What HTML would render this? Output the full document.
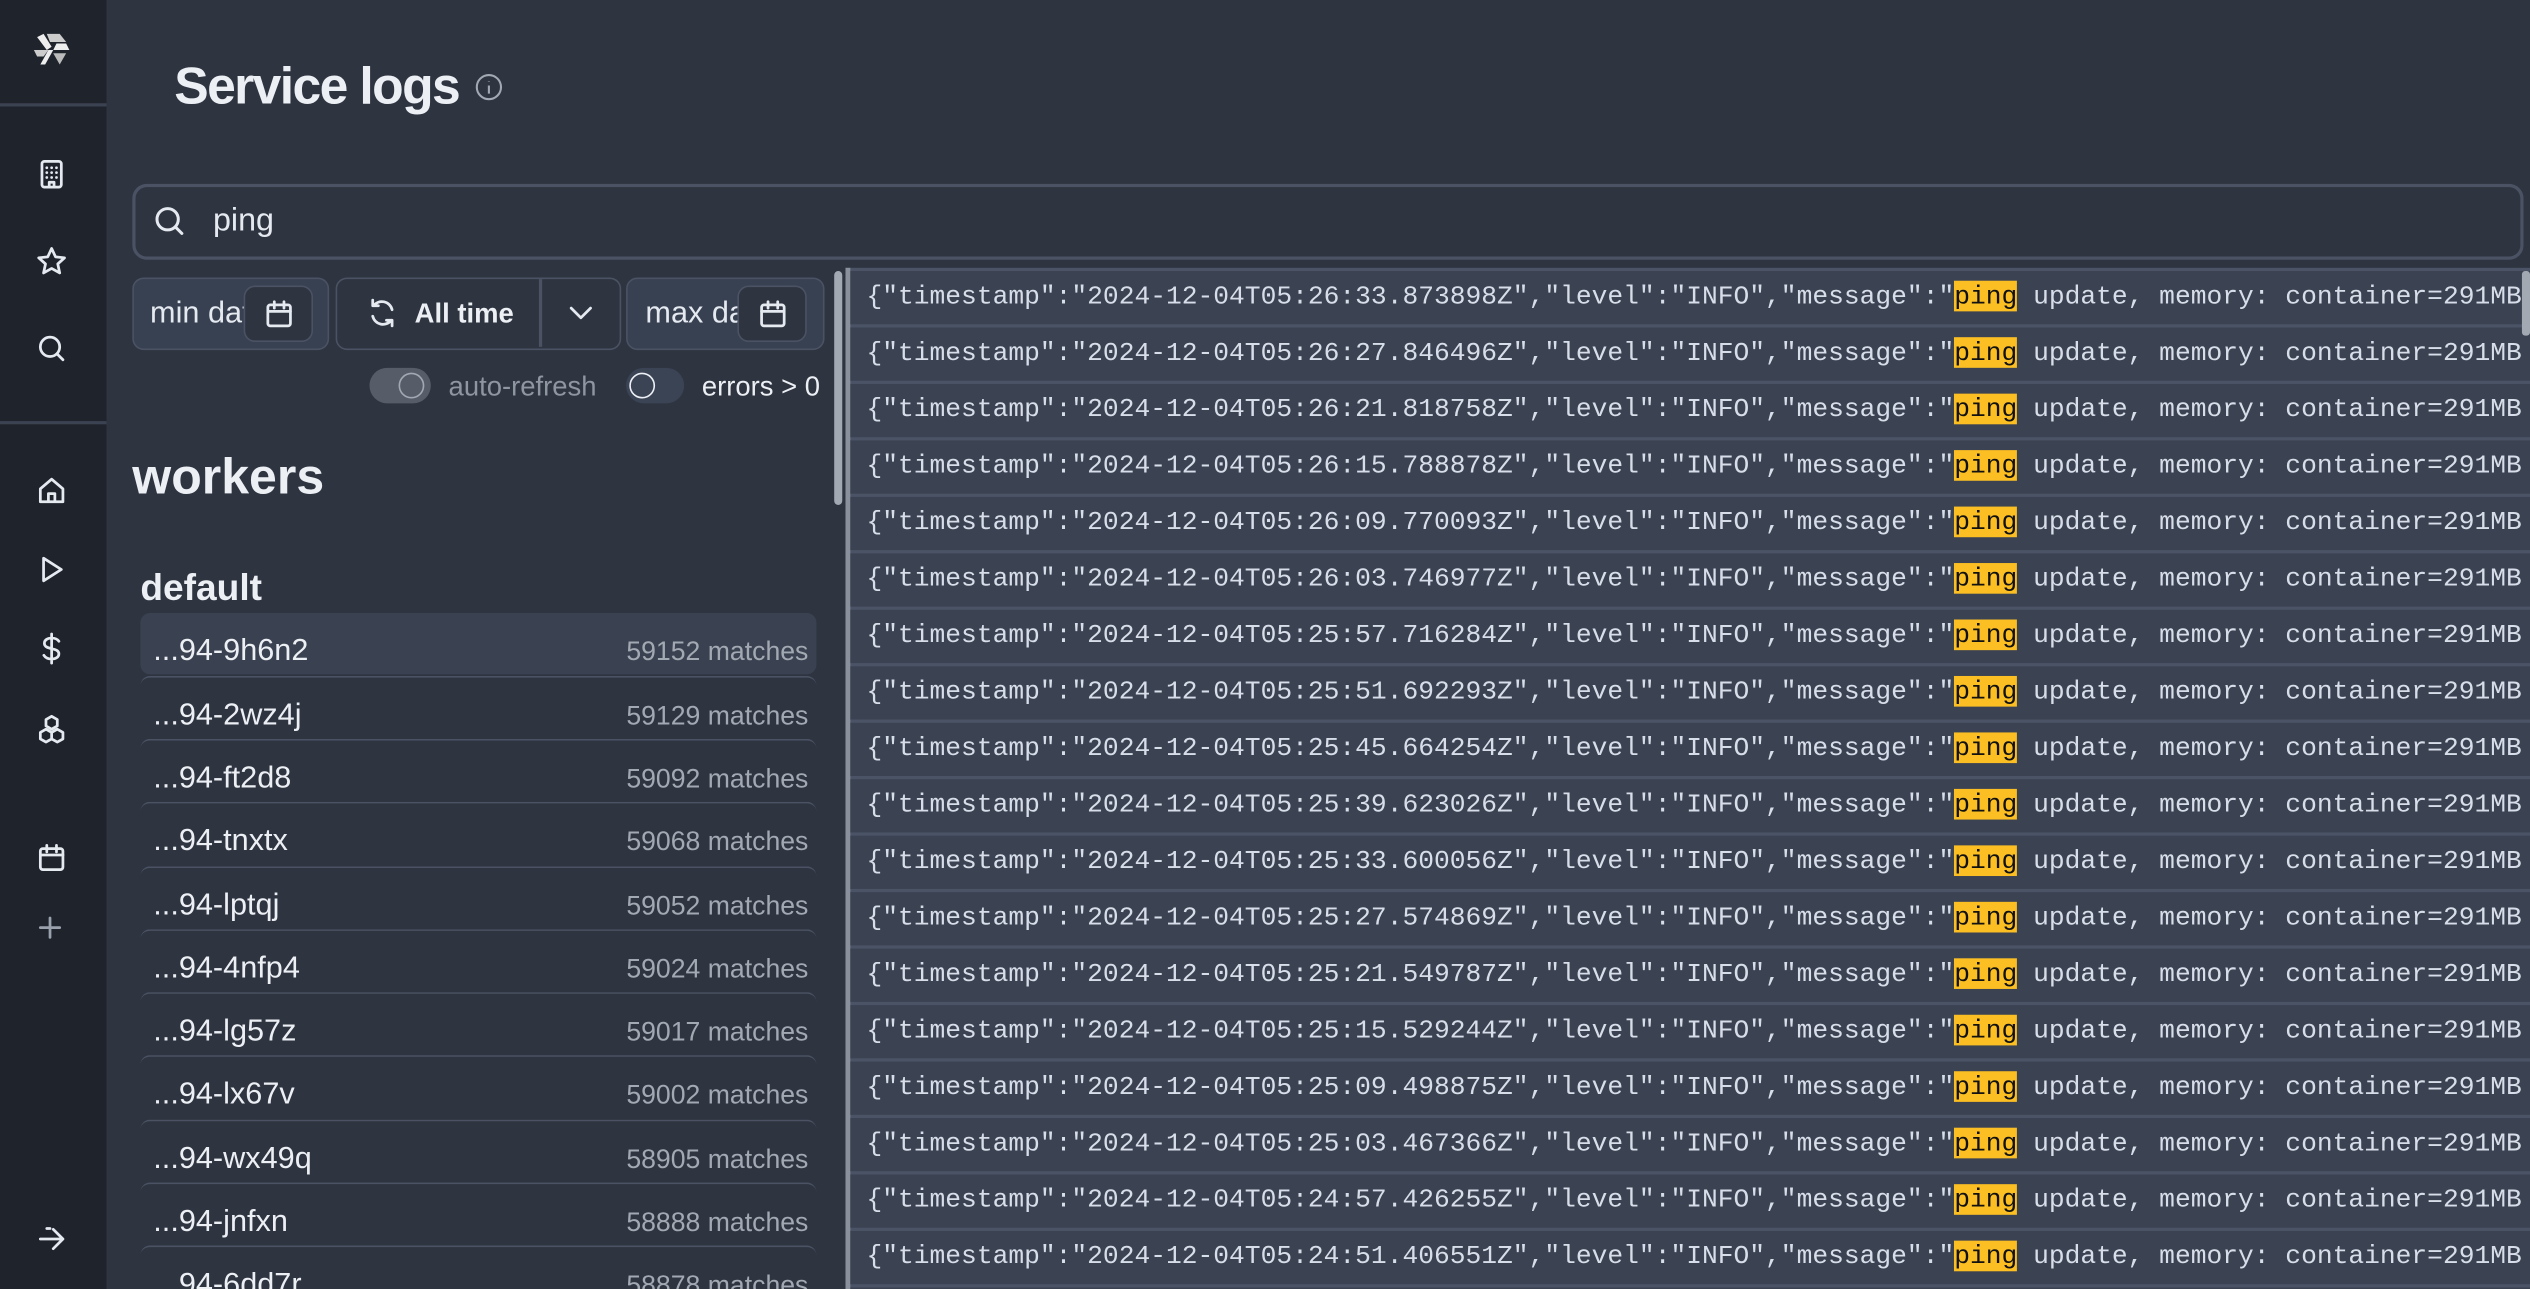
<!DOCTYPE html>
<html><head><meta charset="utf-8"><style>
html,body{margin:0;padding:0;width:2530px;height:1289px;overflow:hidden;background:#2e3440}
#w{position:absolute;left:0;top:0;width:1568px;height:799px;transform:scale(1.61352,1.6133);transform-origin:0 0;font-family:"Liberation Sans",sans-serif;color:#eceff4;overflow:hidden;background:#2e3440}
.a{position:absolute}
.side{left:0;top:0;width:66px;height:799px;background:#1f232c}
.ic{position:absolute;left:22px;width:20px;height:20px;fill:none;stroke:#e5e9f0;stroke-width:1.7;stroke-linecap:round;stroke-linejoin:round}
.box{border:1.5px solid #4a5263;border-radius:7px;box-sizing:border-box}
.row{position:absolute;left:87px;width:419px;height:38px;border-top:1.5px solid #4a5263;border-radius:6px 6px 0 0;box-sizing:border-box}
.row .n{position:absolute;left:8px;top:13px;font-size:19px;color:#eceff4}
.row .m{position:absolute;right:5px;top:15px;font-size:16.5px;color:#a3a9b3}
.log{position:absolute;left:527px;width:1041px;height:33px;background:#3b4252;font-family:"Liberation Mono",monospace;font-size:16.3px;color:#d8dee9;white-space:pre;line-height:32px;text-indent:10px;overflow:hidden}
.log b{font-weight:normal;background:#fbbf24;color:#111}
</style></head><body><div id="w">
<div class="a side"></div>
<div class="a" style="left:0;top:64px;width:66px;height:1.5px;background:#3b4252"></div>
<div class="a" style="left:0;top:261px;width:66px;height:1.5px;background:#3b4252"></div>
<svg class="a" style="left:19px;top:17px" width="26" height="26" viewBox="0 0 26 26"><g fill="#eee"><polygon points="4,6 8,4 13,12 10,14"/><polygon points="10,4 18,4 22,9 12,9" fill="#ccc"/><polygon points="22,10 24,14 14,14 16,10"/><polygon points="22,16 18,23 14,16" fill="#bbb"/><polygon points="14,14 9,23 6,23 11,14"/><polygon points="2,14 11,14 8,18 4,18" fill="#ccc"/></g></svg>
<svg class="ic" style="top:98px" viewBox="0 0 20 20"><rect x="4" y="2" width="12" height="16" rx="1.5"/><path d="M7 6h0M10 6h0M13 6h0M7 9h0M10 9h0M13 9h0M7 12h0M10 12h0M13 12h0M8.5 18v-3h3v3"/></svg>
<svg class="ic" style="top:152px" viewBox="0 0 20 20"><path d="M10 2l2.4 5.2 5.6.6-4.2 3.8 1.2 5.6L10 14.4 5 17.2l1.2-5.6L2 7.8l5.6-.6z"/></svg>
<svg class="ic" style="top:206px" viewBox="0 0 20 20"><circle cx="9" cy="9" r="6"/><path d="M13.5 13.5L17 17"/></svg>
<svg class="ic" style="top:294px" viewBox="0 0 20 20"><path d="M3 9l7-6 7 6v8H3zM8 17v-5h4v5"/></svg>
<svg class="ic" style="top:343px" viewBox="0 0 20 20"><path d="M5 3l11 7-11 7z"/></svg>
<svg class="ic" style="top:392px" viewBox="0 0 20 20"><path d="M10 1v18M14.5 5.5c-1-1.5-2.5-2-4.5-2-2.5 0-4.5 1.2-4.5 3.2 0 4.5 9 2.3 9 6.6 0 2-2 3.2-4.5 3.2-2.2 0-3.8-.7-4.8-2.3"/></svg>
<svg class="ic" style="top:442px" viewBox="0 0 20 20"><path d="M10 2l3.5 2v4L10 10 6.5 8V4zM6.5 10l3.5 2v4l-3.5 2L3 16v-4zM13.5 10l3.5 2v4l-3.5 2L10 16v-4z"/></svg>
<svg class="ic" style="top:522px" viewBox="0 0 20 20"><rect x="3" y="4" width="14" height="13" rx="1.5"/><path d="M3 8h14M7 2v4M13 2v4"/></svg>
<svg class="ic" style="top:565px;left:21px;stroke:#9aa1ad" viewBox="0 0 20 20"><path d="M10 4v12M4 10h12"/></svg>
<svg class="ic" style="top:758px" viewBox="0 0 20 20"><path d="M3 10h14M11 4l6 6-6 6M7 3.5h2"/></svg>

<div class="a" style="left:108px;top:35px;font-size:32px;font-weight:bold;letter-spacing:-1px;color:#eceff4">Service logs</div>
<svg class="a" style="left:294px;top:45px" width="18" height="18" viewBox="0 0 18 18" fill="none" stroke="#a3a9b3" stroke-width="1.3"><circle cx="9" cy="9" r="7.5"/><path d="M9 8v5M9 5.2v.3"/></svg>

<div class="a box" style="left:82px;top:114px;width:1482px;height:47px;border-width:2px;border-radius:9px"></div>
<svg class="a" style="left:94px;top:126px" width="22" height="22" viewBox="0 0 20 20" fill="none" stroke="#e5e9f0" stroke-width="1.7" stroke-linecap="round"><circle cx="9" cy="9" r="6"/><path d="M13.5 13.5L17 17"/></svg>
<div class="a" style="left:132px;top:126px;font-size:20px;color:#e5e9f0">ping</div>

<div class="a box" style="left:82px;top:172px;width:122px;height:45px;background:#384152;overflow:hidden"><div class="a" style="left:10px;top:11px;font-size:19px;color:#e5e9f0">min date</div><div class="a box" style="left:68px;top:4px;width:43px;height:35px;background:#2e3440"><svg class="ic" style="left:11px;top:7px" viewBox="0 0 20 20"><rect x="3" y="4" width="14" height="13" rx="1.5"/><path d="M3 8h14M7 2v4M13 2v4"/></svg></div></div>
<div class="a box" style="left:208px;top:172px;width:177px;height:45px;background:#2e3440"><div class="a" style="left:125px;top:0;width:1.5px;height:42px;background:#4a5263"></div>
<svg class="ic" style="left:18px;top:11px" viewBox="0 0 20 20"><path d="M16 8a6.5 6.5 0 0 0-11.5-2.5M4 12a6.5 6.5 0 0 0 11.5 2.5M4 2v3.5h3.5M16 18v-3.5h-3.5"/></svg>
<div class="a" style="left:48px;top:12px;font-size:17px;font-weight:bold;color:#eceff4">All time</div>
<svg class="ic" style="left:141px;top:11px" viewBox="0 0 20 20"><path d="M4 7l6 6 6-6"/></svg></div>
<div class="a box" style="left:388px;top:172px;width:123px;height:45px;background:#384152;overflow:hidden"><div class="a" style="left:11px;top:11px;font-size:19px;color:#e5e9f0">max date</div><div class="a box" style="left:68px;top:4px;width:43px;height:35px;background:#2e3440"><svg class="ic" style="left:11px;top:7px" viewBox="0 0 20 20"><rect x="3" y="4" width="14" height="13" rx="1.5"/><path d="M3 8h14M7 2v4M13 2v4"/></svg></div></div>

<div class="a" style="left:229px;top:228px;width:38px;height:22px;border-radius:11px;background:#575d68"></div>
<div class="a" style="left:247px;top:231px;width:14px;height:14px;border-radius:50%;border:1.7px solid #a3a9b3"></div>
<div class="a" style="left:278px;top:230px;font-size:17px;color:#8f96a1">auto-refresh</div>
<div class="a" style="left:388px;top:228px;width:36px;height:22px;border-radius:11px;background:#3b4455"></div>
<div class="a" style="left:390px;top:231px;width:14px;height:14px;border-radius:50%;border:1.7px solid #eceff4"></div>
<div class="a" style="left:435px;top:230px;font-size:17px;color:#eceff4">errors &gt; 0</div>

<div class="a" style="left:517px;top:168px;width:5px;height:145px;border-radius:3px;background:#a3a9b3"></div>

<div class="a" style="left:82px;top:278px;font-size:31px;font-weight:bold;color:#eceff4">workers</div>
<div class="a" style="left:87px;top:351px;font-size:23px;font-weight:bold;color:#eceff4">default</div>

<div class="row" style="top:380px;background:#3a4150;border-top:none;border-radius:6px"><span class="n">...94-9h6n2</span><span class="m">59152 matches</span></div>
<div class="row" style="top:419px"><span class="n">...94-2wz4j</span><span class="m">59129 matches</span></div>
<div class="row" style="top:458px"><span class="n">...94-ft2d8</span><span class="m">59092 matches</span></div>
<div class="row" style="top:497px"><span class="n">...94-tnxtx</span><span class="m">59068 matches</span></div>
<div class="row" style="top:537px"><span class="n">...94-lptqj</span><span class="m">59052 matches</span></div>
<div class="row" style="top:576px"><span class="n">...94-4nfp4</span><span class="m">59024 matches</span></div>
<div class="row" style="top:615px"><span class="n">...94-lg57z</span><span class="m">59017 matches</span></div>
<div class="row" style="top:654px"><span class="n">...94-lx67v</span><span class="m">59002 matches</span></div>
<div class="row" style="top:694px"><span class="n">...94-wx49q</span><span class="m">58905 matches</span></div>
<div class="row" style="top:733px"><span class="n">...94-jnfxn</span><span class="m">58888 matches</span></div>
<div class="row" style="top:772px"><span class="n">...94-6dd7r</span><span class="m">58878 matches</span></div>

<div class="a" style="left:524px;top:166px;width:1044px;height:640px;background:#4a5466"></div>
<div class="a" style="left:524px;top:166px;width:3px;height:640px;background:#8a919c"></div>
<div class="log" style="top:168px">{"timestamp":"2024-12-04T05:26:33.873898Z","level":"INFO","message":"<b>ping</b> update, memory: container=291MB</div>
<div class="log" style="top:203px">{"timestamp":"2024-12-04T05:26:27.846496Z","level":"INFO","message":"<b>ping</b> update, memory: container=291MB</div>
<div class="log" style="top:238px">{"timestamp":"2024-12-04T05:26:21.818758Z","level":"INFO","message":"<b>ping</b> update, memory: container=291MB</div>
<div class="log" style="top:273px">{"timestamp":"2024-12-04T05:26:15.788878Z","level":"INFO","message":"<b>ping</b> update, memory: container=291MB</div>
<div class="log" style="top:308px">{"timestamp":"2024-12-04T05:26:09.770093Z","level":"INFO","message":"<b>ping</b> update, memory: container=291MB</div>
<div class="log" style="top:343px">{"timestamp":"2024-12-04T05:26:03.746977Z","level":"INFO","message":"<b>ping</b> update, memory: container=291MB</div>
<div class="log" style="top:378px">{"timestamp":"2024-12-04T05:25:57.716284Z","level":"INFO","message":"<b>ping</b> update, memory: container=291MB</div>
<div class="log" style="top:413px">{"timestamp":"2024-12-04T05:25:51.692293Z","level":"INFO","message":"<b>ping</b> update, memory: container=291MB</div>
<div class="log" style="top:448px">{"timestamp":"2024-12-04T05:25:45.664254Z","level":"INFO","message":"<b>ping</b> update, memory: container=291MB</div>
<div class="log" style="top:483px">{"timestamp":"2024-12-04T05:25:39.623026Z","level":"INFO","message":"<b>ping</b> update, memory: container=291MB</div>
<div class="log" style="top:518px">{"timestamp":"2024-12-04T05:25:33.600056Z","level":"INFO","message":"<b>ping</b> update, memory: container=291MB</div>
<div class="log" style="top:553px">{"timestamp":"2024-12-04T05:25:27.574869Z","level":"INFO","message":"<b>ping</b> update, memory: container=291MB</div>
<div class="log" style="top:588px">{"timestamp":"2024-12-04T05:25:21.549787Z","level":"INFO","message":"<b>ping</b> update, memory: container=291MB</div>
<div class="log" style="top:623px">{"timestamp":"2024-12-04T05:25:15.529244Z","level":"INFO","message":"<b>ping</b> update, memory: container=291MB</div>
<div class="log" style="top:658px">{"timestamp":"2024-12-04T05:25:09.498875Z","level":"INFO","message":"<b>ping</b> update, memory: container=291MB</div>
<div class="log" style="top:693px">{"timestamp":"2024-12-04T05:25:03.467366Z","level":"INFO","message":"<b>ping</b> update, memory: container=291MB</div>
<div class="log" style="top:728px">{"timestamp":"2024-12-04T05:24:57.426255Z","level":"INFO","message":"<b>ping</b> update, memory: container=291MB</div>
<div class="log" style="top:763px">{"timestamp":"2024-12-04T05:24:51.406551Z","level":"INFO","message":"<b>ping</b> update, memory: container=291MB</div>
<div class="log" style="top:798px">{"timestamp":"2024-12-04T05:24:45.380121Z","level":"INFO","message":"<b>ping</b> update, memory: container=291MB</div>
<div class="a" style="left:1563px;top:168px;width:5px;height:40px;border-radius:2px;background:#a3a9b3"></div>
</div></body></html>
